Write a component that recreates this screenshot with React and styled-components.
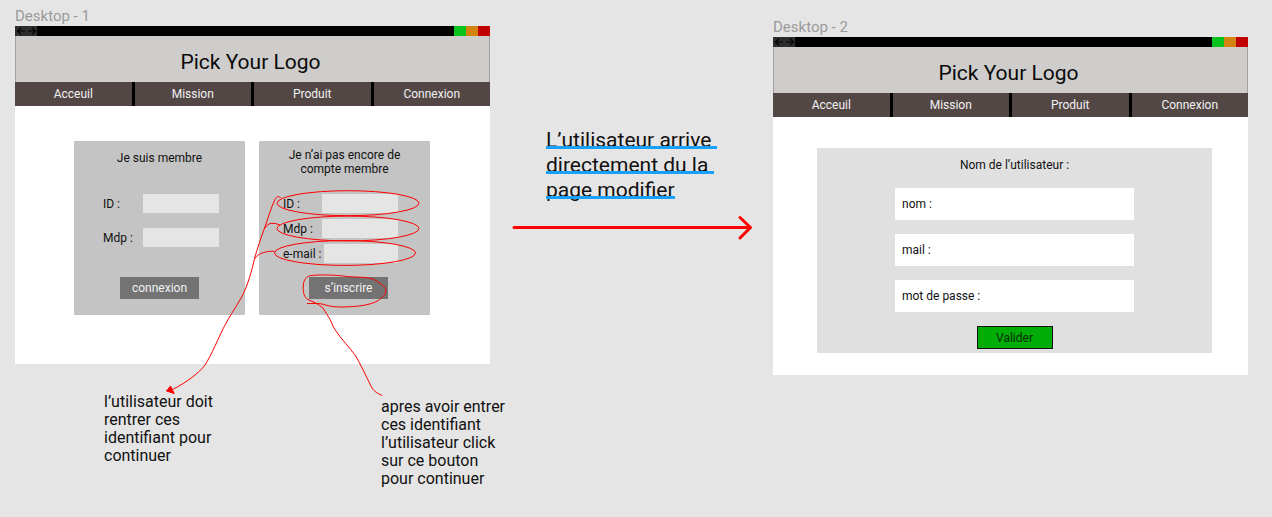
import React from "react";
import styled, { createGlobalStyle } from "styled-components";

const GlobalStyle = createGlobalStyle`
  *, *::before, *::after { box-sizing: border-box; }
  body {
    margin: 0;
    background: #e5e5e5;
    color: #111;
    font-family: Roboto, "Liberation Sans", sans-serif;
    font-size: 12px;
    line-height: 14px;
  }
  h1, h2, p { margin: 0; font-weight: 400; }
  button, input { font: inherit; border: 0; padding: 0; margin: 0; border-radius: 0; }
`;

/* Free canvas: artboards, notes and arrows each have their own place on it. */
const Canvas = styled.main`
  position: relative;
  min-height: 100vh;
  overflow: hidden;
`;

const Placed = styled.div`
  position: absolute;
  left: ${(p) => p.$x}px;
  top: ${(p) => p.$y}px;
`;

const Artboard = styled(Placed).attrs({ as: "section" })`
  width: 475px;
`;

const ArtboardName = styled.h2`
  padding-bottom: 2px;
  color: #9b9b9b;
  font-size: 15px;
  line-height: 16px;
`;

const Screen = styled.div`
  background: #fff;
`;

const TitleBar = styled.div`
  display: flex;
  justify-content: space-between;
  height: 10px;
  background: #000;
`;

const History = styled.div`
  display: flex;
  width: 22px;
  background: #2d2d2d;
`;

const HistoryButton = styled.button`
  flex: 1;
  display: flex;
  align-items: center;
  justify-content: center;
  background: transparent;
`;

const WindowButtons = styled.div`
  display: flex;
`;

const WindowButton = styled.button`
  width: 12px;
  background: ${(p) => p.$color};
`;

const Header = styled.header`
  display: flex;
  align-items: center;
  justify-content: center;
  height: 46px;
  padding: 6px 4px 0 0;
  background: #cecdcb;
  border: solid #a3a1a0;
  border-width: 0 1px;
`;

const Logo = styled.h1`
  font-size: 21px;
  line-height: 24px;
  color: #0a0a0a;
`;

const Nav = styled.nav`
  display: grid;
  grid-template-columns: repeat(4, 1fr);
  gap: 3px;
  height: 24px;
  background: #000;
`;

const NavLink = styled.a`
  display: flex;
  align-items: center;
  justify-content: center;
  background: #524745;
  color: #f2f2f2;
  text-decoration: none;
`;

const Cards = styled.div`
  display: flex;
  gap: 14px;
  padding: 35px 59px 49px;
`;

const Card = styled.form`
  width: 171px;
  height: 174px;
  padding: 7px 24px 0;
  background: #c4c4c4;
`;

const CardHead = styled.div`
  height: 46px;
`;

const CardTitle = styled.h2`
  display: flex;
  align-items: center;
  justify-content: center;
  min-height: 20px;
  font-size: 12px;
  line-height: 14px;
  text-align: center;
`;

const CardFields = styled.div`
  display: grid;
  grid-template-columns: minmax(0, 1fr);
  gap: ${(p) => p.$gap}px;
  height: 83px;
  align-content: start;
  padding: ${(p) => (p.$inset ? "0 2px 0 5px" : "0 8px 0 0")};
`;

const CardField = styled.label`
  display: flex;
  align-items: center;
  justify-content: space-between;
  gap: 3px;
  white-space: nowrap;
`;

const CardInput = styled.input`
  flex: 0 1 76px;
  min-width: 0;
  height: 19px;
  background: #e5e5e5;
`;

const CardButton = styled.button`
  display: block;
  width: 79px;
  height: 22px;
  margin: ${(p) => (p.$centered ? "0 auto" : "0 18px 0 auto")};
  background: #737373;
  color: #f2f2f2;
`;

const PanelWrap = styled.div`
  padding: 31px 36px 22px 44px;
`;

const Panel = styled.form`
  display: flex;
  flex-direction: column;
  align-items: center;
  gap: 14px;
  padding: 10px 0 4px;
  background: #e0e0e0;
`;

const PanelTitle = styled.h2`
  padding-bottom: 2px;
  font-size: 12px;
  line-height: 14px;
`;

const PanelField = styled.label`
  display: flex;
  align-items: center;
  gap: 6px;
  width: 239px;
  height: 32px;
  padding: 0 7px;
  background: #fff;
`;

const PanelInput = styled.input`
  flex: 1;
  min-width: 0;
  background: transparent;
`;

const ValidateButton = styled.button`
  width: 76px;
  height: 23px;
  background: #00ad07;
  border: 1px solid #111;
  color: #062b06;
`;

const Note = styled(Placed).attrs({ as: "p" })`
  width: ${(p) => p.$width}px;
  font-size: 16px;
  line-height: 18px;
`;

const LinkNote = styled(Placed).attrs({ as: "p" })`
  font-size: 21px;
  line-height: 25px;
`;

const UnderlinedLine = styled.span`
  display: block;
  position: relative;
  width: fit-content;
  white-space: pre;
  &::after {
    content: "";
    position: absolute;
    left: 0;
    right: 0;
    bottom: 4px;
    height: 3px;
    background: #18a0fb;
  }
`;

const Drawing = styled.svg`
  position: absolute;
  left: 0;
  top: 0;
  pointer-events: none;
  overflow: visible;
`;

function ArrowIcon({ flip }) {
  return (
    <svg width="10" height="8" viewBox="0 0 10 8" fill="none" stroke="#000" strokeWidth="1.2" aria-hidden="true">
      <path d={flip ? "M1 4H8.500M5 .6L8.500 4L5 7.400" : "M9 4H1.500M5 .6L1.500 4L5 7.400"} />
    </svg>
  );
}

function Browser({ name, x, y, children }) {
  return (
    <Artboard $x={x} $y={y}>
      <ArtboardName>{name}</ArtboardName>
      <Screen>
        <TitleBar>
          <History>
            <HistoryButton type="button" aria-label="Précédent"><ArrowIcon /></HistoryButton>
            <HistoryButton type="button" aria-label="Suivant"><ArrowIcon flip /></HistoryButton>
          </History>
          <WindowButtons>
            <WindowButton type="button" aria-label="Réduire" $color="#09c31d" />
            <WindowButton type="button" aria-label="Agrandir" $color="#d3830f" />
            <WindowButton type="button" aria-label="Fermer" $color="#c00000" />
          </WindowButtons>
        </TitleBar>
        <Header><Logo>Pick Your Logo</Logo></Header>
        <Nav>
          {["Acceuil", "Mission", "Produit", "Connexion"].map((item) => (
            <NavLink key={item} href="#">{item}</NavLink>
          ))}
        </Nav>
        {children}
      </Screen>
    </Artboard>
  );
}

function MemberCard({ title, fields, gap, inset, action }) {
  return (
    <Card onSubmit={(e) => e.preventDefault()}>
      <CardHead><CardTitle>{title}</CardTitle></CardHead>
      <CardFields $gap={gap} $inset={inset}>
        {fields.map((field) => (
          <CardField key={field}>
            {field}
            <CardInput type={field.startsWith("Mdp") ? "password" : "text"} />
          </CardField>
        ))}
      </CardFields>
      <CardButton $centered={inset}>{action}</CardButton>
    </Card>
  );
}

export default function App() {
  return (
    <Canvas>
      <GlobalStyle />
      <Browser name="Desktop - 1" x={15} y={8}>
        <Cards>
          <MemberCard title="Je suis membre" fields={["ID :", "Mdp :"]} gap={15} inset action="connexion" />
          <MemberCard
            title="Je n’ai pas encore de compte membre"
            fields={["ID :", "Mdp :", "e-mail :"]}
            gap={6}
            action="s’inscrire"
          />
        </Cards>
      </Browser>

      <Browser name="Desktop - 2" x={773} y={19}>
        <PanelWrap>
          <Panel onSubmit={(e) => e.preventDefault()}>
            <PanelTitle>Nom de l’utilisateur :</PanelTitle>
            {["nom :", "mail :", "mot de passe :"].map((field) => (
              <PanelField key={field}>
                {field}
                <PanelInput type={field.startsWith("mot") ? "password" : "text"} />
              </PanelField>
            ))}
            <ValidateButton>Valider</ValidateButton>
          </Panel>
        </PanelWrap>
      </Browser>

      <Note $x={104} $y={393} $width={120}>
        l’utilisateur doit rentrer ces identifiant pour continuer
      </Note>
      <Note $x={381} $y={398} $width={130}>
        apres avoir entrer ces identifiant l’utilisateur click sur ce bouton pour continuer
      </Note>
      <LinkNote $x={546} $y={128}>
        <UnderlinedLine>{"L’utilisateur arrive "}</UnderlinedLine>
        <UnderlinedLine>{"directement du la "}</UnderlinedLine>
        <UnderlinedLine>page modifier</UnderlinedLine>
      </LinkNote>

      <Drawing width="760" height="400" viewBox="0 0 760 400" fill="none" stroke="#ff0000" aria-hidden="true">
        <ellipse cx="348" cy="203.2" rx="71" ry="12.5" />
        <ellipse cx="348" cy="228.5" rx="71" ry="12.4" />
        <ellipse cx="345" cy="253" rx="70.5" ry="12.4" />
        <path d="M281 198C279.500 196.500 277 195.500 275 199.300C271 208 268 218 265 227C261 237 257 250 254.500 258.500C252 270 248 285 241.700 297C236 307 229 317 223.300 328.300C219 337 211 356 205 365C199 373 187 382 173 389.300" />
        <path d="M280 225C275 223 268.500 221.500 265 228" />
        <path d="M274.500 251.300C268 251 259 252 254.500 259" />
        <path d="M166.500 391L170.500 386L174.200 393.500Z" fill="#ff0000" />
        <path d="M307 303.500C312 304 318 302.500 324 304.500C331 307 338 307 344 307C358 306.500 369 305.500 378 300.700C383 297 386 294 386 290.500C385 286 379 282 373 279C366 276.500 356 277.500 347 276.500C337 275 322 274.500 313 275.300C306 275.500 303.500 280 303.300 286C303 293 304 297 308 299.500C313 302 318 303.500 323 308C326 313 328 316 330 319.300C332 323 333 327 335.700 330.700C342 340 350 348 355 355C360 363 366 376 370 384C373 391 376 392.500 382 395.500" />
        <path d="M514 227.500H750M740 217.500L750.500 227.500L740 238" strokeWidth="3" strokeLinecap="round" strokeLinejoin="round" />
      </Drawing>
    </Canvas>
  );
}
